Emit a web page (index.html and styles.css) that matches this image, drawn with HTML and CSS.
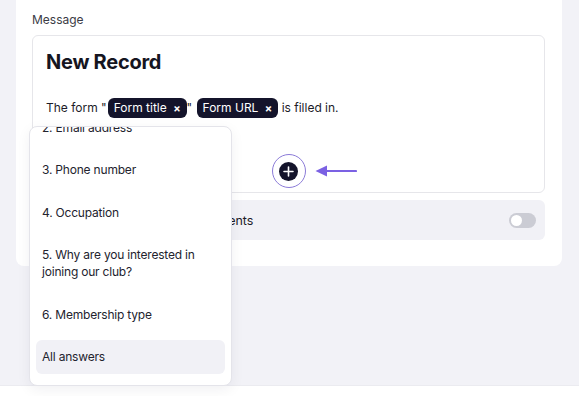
FILE: index.html
```html
<!DOCTYPE html>
<html>
<head>
<meta charset="utf-8">
<link rel="stylesheet" href="styles.css">
</head>
<body>
<div class="page">
  <div class="card">
    <div class="label">Message</div>
    <div class="editor">
      <h1 class="title">New Record</h1>
      <p class="line">The form "<span class="chip">Form title <span class="x">×</span></span>" <span class="chip">Form URL <span class="x">×</span></span> is filled in.</p>
      <div class="add-wrap">
        <button class="add" aria-label="Insert variable">
          <svg width="19" height="19" viewBox="0 0 19 19"><circle cx="9.5" cy="9.5" r="9.5" fill="#14142b"/><path d="M9.5 5v9M5 9.5h9" stroke="#fff" stroke-width="1.6" stroke-linecap="round"/></svg>
        </button>
        <svg class="arrow" width="42" height="14" viewBox="0 0 42 14"><path d="M10 7h31" stroke="#7b61e3" stroke-width="2.2" stroke-linecap="round"/><path d="M0.5 7L12 1.5v11z" fill="#7b61e3"/></svg>
      </div>
    </div>
    <div class="option-row">
      <span>Send uploaded files as attachments</span>
      <span class="toggle"><span class="knob"></span></span>
    </div>
    <div class="dropdown">
      <ul class="list">
        <li class="item">2. Email address</li>
        <li class="item">3. Phone number</li>
        <li class="item">4. Occupation</li>
        <li class="item">5. Why are you interested in joining our club?</li>
        <li class="item">6. Membership type</li>
        <li class="item active">All answers</li>
      </ul>
    </div>
  </div>
  <div class="spacer"></div>
  <div class="footer"></div>
</div>
</body>
</html>
```

FILE: styles.css
```css
* { box-sizing: border-box; }
html, body { margin: 0; padding: 0; }
body {
  background: #f2f2f7;
  font-family: Inter, "Noto Sans", sans-serif;
  color: #1c1c28;
  width: 579px;
  height: 396px;
  overflow: hidden;
}
.page {
  display: flex;
  flex-direction: column;
  height: 396px;
}
.card {
  position: relative;
  margin: 0 17px 0 16px;
  background: #fff;
  border-radius: 0 0 8px 8px;
  padding: 12px 17px 26px 16px;
}
.label {
  font-size: 12px;
  line-height: 16px;
  color: #3b3b45;
  margin-bottom: 7px;
}
.editor {
  border: 1px solid #e6e6ea;
  border-radius: 6px;
  padding: 13px 13px 4px 13px;
  height: 158px;
}
.title {
  margin: 0;
  font-size: 20px;
  line-height: 26px;
  font-weight: 700;
  letter-spacing: -0.25px;
  color: #15151f;
}
.line {
  margin: 22px 0 0 0;
  font-size: 12px;
  line-height: 22px;
  color: #1c1c28;
}
.chip {
  display: inline-block;
  background: #14142b;
  color: #fff;
  border-radius: 6px;
  padding: 0 6px 0 6px;
  line-height: 20px;
  font-size: 12px;
  margin-left: 1px;
}
.chip .x {
  font-size: 11px;
  font-weight: 700;
  margin-left: 3px;
}
.add-wrap {
  position: relative;
  display: flex;
  justify-content: center;
  margin-top: 35px;
}
.add {
  width: 34px;
  height: 34px;
  border-radius: 50%;
  border: 1.5px solid #8b7bd8;
  background: #fff;
  padding: 0;
  display: flex;
  align-items: center;
  justify-content: center;
}
.add svg { display: block; }
.arrow {
  position: absolute;
  left: 269px;
  top: 10px;
}
.option-row {
  margin-top: 7px;
  height: 40px;
  background: #f1f1f6;
  border-radius: 6px;
  display: flex;
  align-items: center;
  justify-content: space-between;
  padding: 0 9px 0 14px;
  font-size: 12.5px;
  letter-spacing: -0.1px;
  color: #1c1c28;
}
.toggle {
  width: 27px;
  height: 15px;
  border-radius: 8px;
  background: #cbccd4;
  position: relative;
  display: block;
}
.knob {
  position: absolute;
  left: 2px;
  top: 2px;
  width: 11px;
  height: 11px;
  border-radius: 50%;
  background: #fff;
}
.dropdown {
  position: absolute;
  left: 13px;
  top: 126px;
  width: 203px;
  height: 260px;
  background: #fff;
  border: 1px solid #e4e4ea;
  border-radius: 8px;
  box-shadow: 0 4px 14px rgba(20, 20, 43, 0.06);
  overflow: hidden;
  padding: 0 6px;
  z-index: 2;
}
.list {
  list-style: none;
  margin: -17px 0 0 0;
  padding: 0;
  display: flex;
  flex-direction: column;
  gap: 8.5px;
}
.item {
  padding: 8.5px 6px;
  font-size: 12px;
  line-height: 17px;
  letter-spacing: -0.2px;
  color: #23232e;
  border-radius: 6px;
}
.item.active {
  background: #f1f1f6;
}
.spacer { flex: 1; }
.footer {
  height: 11px;
  background: #fff;
  border-top: 1px solid #ebebf0;
}
```
